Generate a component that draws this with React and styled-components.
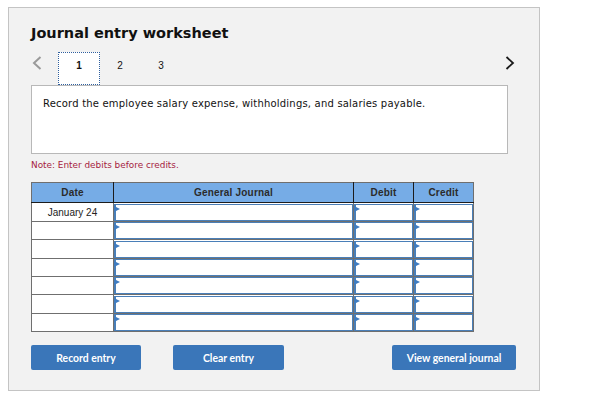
import styled, { createGlobalStyle } from "styled-components";

const GlobalStyle = createGlobalStyle`
  html, body {
    margin: 0;
    background: #fff;
  }
  body {
    padding: 7px 0 0 8px;
  }
  * {
    box-sizing: border-box;
  }
`;

const rows = [
  { date: "January 24", height: 19 },
  { date: "", height: 18 },
  { date: "", height: 19 },
  { date: "", height: 18 },
  { date: "", height: 18 },
  { date: "", height: 19 },
  { date: "", height: 18 },
];

function Chevron({ left }) {
  return (
    <svg width="10" height="14" viewBox="0 0 10 14">
      <path
        d={left ? "M8.5 1 L2 7 L8.5 13" : "M1.5 1 L8 7 L1.5 13"}
        fill="none"
        stroke={left ? "#9a9a9a" : "#1a1a1a"}
        strokeWidth={left ? 2 : 1.8}
      />
    </svg>
  );
}

function EntryCell() {
  return (
    <Td>
      <EntryBox>
        <Marker />
      </EntryBox>
    </Td>
  );
}

export default function App() {
  return (
    <>
      <GlobalStyle />
      <Panel>
        <Title>Journal entry worksheet</Title>
        <Nav>
          <TabGroup>
            <Arrow>
              <Chevron left />
            </Arrow>
            <Tab $active>1</Tab>
            <Tab>2</Tab>
            <Tab>3</Tab>
          </TabGroup>
          <Arrow $right>
            <Chevron />
          </Arrow>
        </Nav>
        <Prompt>Record the employee salary expense, withholdings, and salaries payable.</Prompt>
        <Note>Note: Enter debits before credits.</Note>
        <Table>
          <colgroup>
            <col width="82" />
            <col width="240" />
            <col width="60" />
            <col width="60" />
          </colgroup>
          <thead>
            <tr>
              <Th>Date</Th>
              <Th>General Journal</Th>
              <Th>Debit</Th>
              <Th>Credit</Th>
            </tr>
          </thead>
          <tbody>
            {rows.map((row, i) => (
              <Row key={i} $height={row.height}>
                <DateCell>{row.date}</DateCell>
                <EntryCell />
                <EntryCell />
                <EntryCell />
              </Row>
            ))}
          </tbody>
        </Table>
        <Actions>
          <Button $width={110}>Record entry</Button>
          <Button $width={111}>Clear entry</Button>
          <Spacer />
          <Button $width={124}>View general journal</Button>
        </Actions>
      </Panel>
    </>
  );
}

const Panel = styled.div`
  width: 532px;
  height: 384px;
  padding: 16px 22px 0;
  background: #f2f2f2;
  border: 1px solid #c4c4c4;
`;

const Title = styled.h1`
  margin: 0;
  height: 28px;
  font: bold 14.5px/18px "DejaVu Sans", sans-serif;
  color: #111;
`;

const Nav = styled.div`
  display: flex;
  justify-content: space-between;
  height: 33px;
`;

const TabGroup = styled.div`
  display: flex;
`;

const Arrow = styled.div`
  width: ${(p) => (p.$right ? "11px" : "27px")};
  padding: 4px 0 0 1px;
  margin-right: ${(p) => (p.$right ? "2px" : "0")};
  line-height: 0;
`;

const Tab = styled.div`
  width: ${(p) => (p.$active ? "42px" : "41px")};
  height: 33px;
  padding-top: ${(p) => (p.$active ? "6px" : "7px")};
  padding-right: ${(p) => (p.$active ? "0" : "1px")};
  text-align: center;
  font: ${(p) => (p.$active ? "bold" : "normal")} 10px/14px "Liberation Sans", sans-serif;
  color: #111;
  background: ${(p) => (p.$active ? "#fff" : "transparent")};
  border: ${(p) => (p.$active ? "1px dotted #2f5f9e" : "0")};
`;

const Prompt = styled.div`
  width: 477px;
  height: 69px;
  padding: 11px 11px 0;
  background: #fff;
  border: 1px solid #b8b8b8;
  font: 10px/14px "DejaVu Sans", sans-serif;
  letter-spacing: 0.2px;
  color: #111;
`;

const Note = styled.div`
  height: 28px;
  padding-top: 4px;
  font: 8.9px/14px "DejaVu Sans", sans-serif;
  color: #a6223f;
`;

const Table = styled.table`
  width: 442px;
  table-layout: fixed;
  border-collapse: collapse;
  border: 1px solid #6f6f6f;
`;

const Th = styled.th`
  height: 20px;
  padding: 0;
  background: #76ace6;
  border-right: 1px solid #1c1c1c;
  border-bottom: 1px solid #1c1c1c;
  font: bold 10px "Liberation Sans", sans-serif;
  color: #2b2b2b;
  letter-spacing: 0.2px;

  &:last-child {
    border-right: 0;
  }
`;

const Row = styled.tr`
  height: ${(p) => p.$height}px;
`;

const Td = styled.td`
  padding: 0;
  background: #fff;
  border: 1px solid #6f6f6f;
`;

const DateCell = styled(Td)`
  text-align: center;
  font: 10px "Liberation Sans", sans-serif;
  color: #222;
`;

const EntryBox = styled.div`
  position: relative;
  height: 100%;
  min-height: 17px;
  background: #fff;
  border: 1px solid #4a7fb8;
  border-width: 1px 1px 1px 2px;
`;

const Marker = styled.span`
  position: absolute;
  top: 1px;
  left: -2px;
  width: 0;
  height: 0;
  border-top: 3px solid transparent;
  border-bottom: 3px solid transparent;
  border-left: 6px solid #3f7cc0;
`;

const Actions = styled.div`
  display: flex;
  gap: 32px;
  width: 485px;
  margin-top: 13px;
`;

const Spacer = styled.div`
  flex: 1;
`;

const Button = styled.button`
  width: ${(p) => p.$width}px;
  height: 25px;
  padding: 0;
  background: #3a76b9;
  border: 0;
  border-radius: 2px;
  font: bold 10.4px "Lato", "Liberation Sans", sans-serif;
  color: #fff;
`;
